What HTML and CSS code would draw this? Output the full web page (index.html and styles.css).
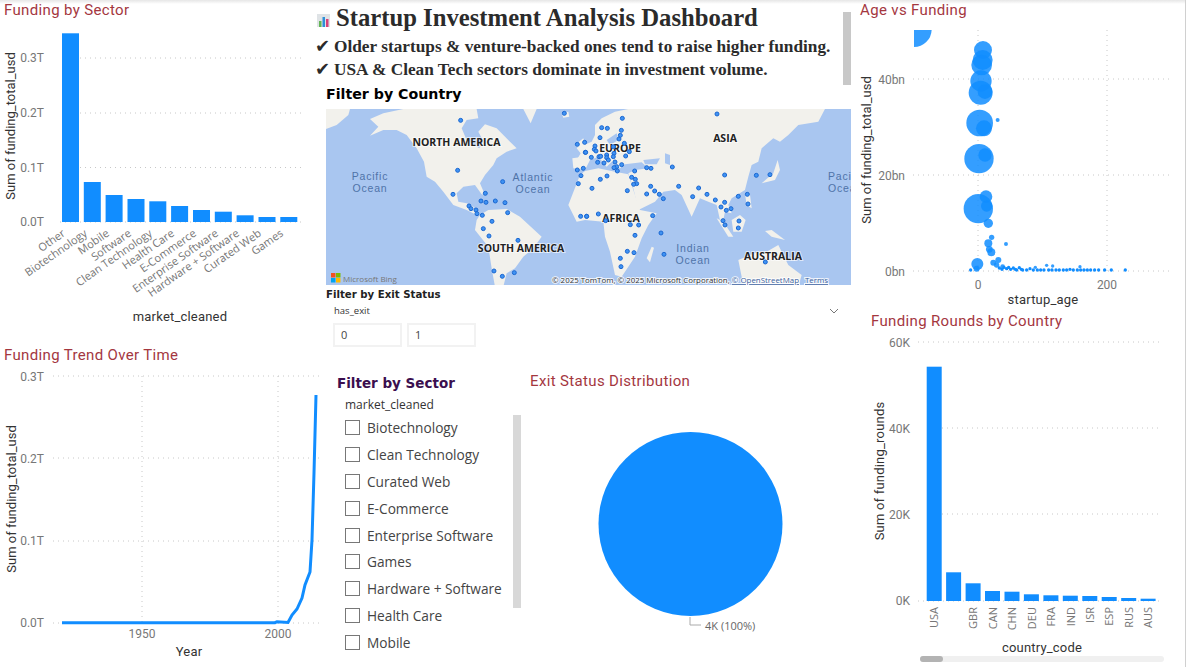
FILE: index.html
```html
<!DOCTYPE html>
<html lang="en">
<head>
    <meta charset="UTF-8">
    <title>Startup Investment Analysis Dashboard</title>
    <link rel="stylesheet" href="styles.css">
</head>
<body>
<div class="report">
    <!-- left column -->
    <div class="column">
        <section class="visual sector-chart">
            <h2 class="visual-title">Funding by Sector</h2>
            <svg width="320" height="320" viewBox="0 20 320 320">
                <g class="grid">
                    <path d="M80 58H304M80 113H304M80 167.5H304M60 222H304"/>
                </g>
                <g class="tick" text-anchor="end">
                    <text x="44" y="62">0.3T</text>
                    <text x="44" y="117">0.2T</text>
                    <text x="44" y="172">0.1T</text>
                    <text x="44" y="226">0.0T</text>
                </g>
                <g class="bar">
                    <rect x="62" y="33.3" width="17" height="188.7"/>
                    <rect x="83.8" y="182" width="17" height="40"/>
                    <rect x="105.6" y="195" width="17" height="27"/>
                    <rect x="127.5" y="199" width="17" height="23"/>
                    <rect x="149.3" y="201.3" width="17" height="20.7"/>
                    <rect x="171.1" y="206" width="17" height="16"/>
                    <rect x="193" y="210" width="17" height="12"/>
                    <rect x="214.8" y="211.7" width="17" height="10.3"/>
                    <rect x="236.6" y="215.3" width="17" height="6.7"/>
                    <rect x="258.5" y="217" width="17" height="5"/>
                    <rect x="280.3" y="217" width="17" height="5"/>
                </g>
                <g class="category" text-anchor="end">
                    <text transform="translate(66 235) rotate(-35)">Other</text>
                    <text transform="translate(88 235) rotate(-35)">Biotechnology</text>
                    <text transform="translate(110 235) rotate(-35)">Mobile</text>
                    <text transform="translate(132 235) rotate(-35)">Software</text>
                    <text transform="translate(153 235) rotate(-35)">Clean Technology</text>
                    <text transform="translate(175 235) rotate(-35)">Health Care</text>
                    <text transform="translate(197 235) rotate(-35)">E-Commerce</text>
                    <text transform="translate(219 235) rotate(-35)">Enterprise Software</text>
                    <text transform="translate(240 235) rotate(-35)">Hardware + Software</text>
                    <text transform="translate(262 235) rotate(-35)">Curated Web</text>
                    <text transform="translate(284 235) rotate(-35)">Games</text>
                </g>
                <text class="axis-title y-title" text-anchor="middle" transform="translate(15 126) rotate(-90)">Sum of funding_total_usd</text>
                <text class="axis-title" text-anchor="middle" x="180" y="321">market_cleaned</text>
            </svg>
        </section>
        <section class="visual trend-chart">
            <h2 class="visual-title">Funding Trend Over Time</h2>
            <svg width="320" height="302" viewBox="0 365 320 302">
                <g class="grid">
                    <path d="M53 376H323M53 458H323M53 541H323M53 623H323M142 376V623M278 376V623"/>
                </g>
                <g class="tick" text-anchor="end">
                    <text x="44" y="381">0.3T</text>
                    <text x="44" y="463">0.2T</text>
                    <text x="44" y="545">0.1T</text>
                    <text x="44" y="627">0.0T</text>
                </g>
                <g class="tick" text-anchor="middle">
                    <text x="142" y="638">1950</text>
                    <text x="278" y="638">2000</text>
                </g>
                <path class="trend-line" d="M62 622.7H275L277 621.7 288 622.4 292 615 297 609 302 598 305 585 310 572 312 540 314 473 316 395"/>
                <text class="axis-title y-title" text-anchor="middle" transform="translate(16 499) rotate(-90)">Sum of funding_total_usd</text>
                <text class="axis-title" text-anchor="middle" x="189" y="656">Year</text>
            </svg>
        </section>
    </div>

    <!-- middle column -->
    <div class="column">
        <header class="summary">
            <div class="summary-text">
                <h1 class="summary-title">
                    <svg class="summary-icon" width="13" height="13" viewBox="0 0 13 13">
                        <rect width="13" height="13" fill="#dfe3e6"/>
                        <rect x="2" y="7" width="2.5" height="6" fill="#63b556"/>
                        <rect x="5.5" y="3" width="2.5" height="10" fill="#2f8fd8"/>
                        <rect x="9" y="5" width="2.5" height="8" fill="#d9407a"/>
                    </svg>
                    Startup Investment Analysis Dashboard
                </h1>
                <p class="summary-line"><span class="check">✔</span>Older startups &amp; venture-backed ones tend to raise higher funding.</p>
                <p class="summary-line"><span class="check">✔</span>USA &amp; Clean Tech sectors dominate in investment volume.</p>
            </div>
            <div class="summary-scroll"></div>
        </header>

        <h3 class="filter-title country-title">Filter by Country</h3>
        <svg class="map" width="525" height="176" viewBox="326 109 525 176">
            <rect class="ocean" x="326" y="109" width="525" height="176"/>
            <!-- west half, traced in 3x crop coordinates -->
            <g class="land" transform="translate(320 105) scale(.3333)">
                <path d="M18 12H90L85 30 50 60 18 72Z"/>
                <path d="M150 42 190 25 250 12H470L475 40 440 45 425 70 440 105 478 130 490 108 475 80 495 58 530 70 570 110 590 130 560 140 530 160 520 180 495 210 480 235 495 270 485 268 465 240 430 245 410 265 415 290 440 295 460 305 480 325 470 330 440 315 400 300 370 260 345 230 320 215 312 170 290 130 260 90 230 75 190 75 150 92 175 65Z"/>
                <path d="M610 12H650L632 55Z"/>
                <path d="M480 330 505 315 560 312 600 335 665 395 640 430 610 455 585 490 560 505 550 545H525L515 490 505 425 465 375 470 345Z"/>
                <path d="M725 25 745 20 748 35 730 38Z"/>
                <path d="M765 120 790 100 800 140 805 165 770 165 785 140Z"/>
            </g>
            <!-- east half -->
            <g class="land" transform="translate(585 105) scale(.3333)">
                <path d="M-35 190-38 160-5 155-25 130 20 110 30 90 30 60 50 40 90 20 130 12H720L700 50 640 60 610 90 585 110 565 100 530 130 520 170 500 180 490 215 480 255 440 280 430 300 440 325 420 320 415 345 425 365 405 345 395 300 370 290 345 280 320 335 290 270 270 255 235 260 210 290 160 315 145 250 130 205 150 195 190 190 170 172 120 178 105 190 80 170 65 185 40 155 15 165 0 195Z"/>
                <path d="M-15 210 0 198 40 190 90 200 130 208 145 255 165 315 215 325 190 360 170 400 150 455 110 515 90 510 75 440 60 395 55 350 0 345-25 350-50 300Z"/>
                <path d="M185 460 200 425 207 428 195 472Z"/>
                <path d="M530 235 565 205 578 165 585 195 570 225Z"/>
                <path d="M395 340 415 350 445 395 430 395Z"/>
                <path d="M440 345 465 330 482 345 470 380 445 380Z"/>
                <path d="M480 265 495 270 500 310 485 300Z"/>
                <path d="M540 378 560 375 600 405 560 395Z"/>
                <path d="M460 465 520 440 545 440 580 420 610 480 650 510 640 545H480L470 515Z"/>
            </g>
            <g class="inland" transform="translate(585 105) scale(.3333)">
                <path d="M175 165 225 160 215 178 180 178Z"/>
                <path d="M240 145 255 150 255 180 240 175Z"/>
                <path d="M65 105 95 85 100 105 75 120Z"/>
            </g>
            <g class="continent" text-anchor="middle">
                <text x="456.5" y="146">NORTH AMERICA</text>
                <text x="521" y="252">SOUTH AMERICA</text>
                <text x="620" y="152">EUROPE</text>
                <text x="725" y="142">ASIA</text>
                <text x="621" y="222">AFRICA</text>
                <text x="773" y="260">AUSTRALIA</text>
            </g>
            <g class="sea" text-anchor="middle">
                <text x="370" y="180">Pacific</text>
                <text x="370" y="191.5">Ocean</text>
                <text x="533" y="181">Atlantic</text>
                <text x="533" y="192.5">Ocean</text>
                <text x="693" y="252">Indian</text>
                <text x="693" y="263.5">Ocean</text>
                <text x="828" y="180" text-anchor="start">Pacific</text>
                <text x="828" y="191.5" text-anchor="start">Ocean</text>
            </g>
            <g class="pins" transform="translate(320 105) scale(.3333)">
                <circle cx="422" cy="46" r="6"/><circle cx="733" cy="25" r="6"/><circle cx="772" cy="118" r="6"/>
                <circle cx="794" cy="112" r="6"/><circle cx="796" cy="142" r="6"/><circle cx="772" cy="195" r="6"/>
                <circle cx="790" cy="190" r="6"/><circle cx="783" cy="212" r="6"/><circle cx="775" cy="236" r="6"/>
                <circle cx="413" cy="196" r="6"/><circle cx="548" cy="230" r="6"/><circle cx="399" cy="268" r="6"/>
                <circle cx="496" cy="265" r="6"/><circle cx="483" cy="288" r="6"/><circle cx="498" cy="292" r="6"/>
                <circle cx="526" cy="288" r="6"/><circle cx="555" cy="293" r="6"/><circle cx="447" cy="303" r="6"/>
                <circle cx="453" cy="311" r="6"/><circle cx="468" cy="315" r="6"/><circle cx="471" cy="326" r="6"/>
                <circle cx="487" cy="331" r="6"/><circle cx="563" cy="323" r="6"/><circle cx="516" cy="349" r="6"/>
                <circle cx="490" cy="371" r="6"/><circle cx="507" cy="393" r="6"/><circle cx="594" cy="406" r="6"/>
                <circle cx="782" cy="334" r="6"/><circle cx="800" cy="334" r="6"/><circle cx="522" cy="498" r="6"/>
                <circle cx="547" cy="514" r="6"/><circle cx="583" cy="503" r="6"/>
            </g>
            <g class="pins" transform="translate(585 105) scale(.3333)">
                <circle cx="396" cy="27" r="6"/><circle cx="112" cy="40" r="6"/><circle cx="50" cy="68" r="6"/>
                <circle cx="67" cy="70" r="6"/><circle cx="109" cy="76" r="6"/><circle cx="106" cy="91" r="6"/>
                <circle cx="45" cy="98" r="6"/><circle cx="102" cy="102" r="6"/><circle cx="118" cy="115" r="6"/>
                <circle cx="30" cy="123" r="6"/><circle cx="85" cy="125" r="6"/><circle cx="28" cy="133" r="6"/>
                <circle cx="33" cy="138" r="6"/><circle cx="133" cy="140" r="6"/><circle cx="2" cy="142" r="6"/>
                <circle cx="87" cy="145" r="6"/><circle cx="65" cy="150" r="6"/><circle cx="122" cy="153" r="6"/>
                <circle cx="19" cy="157" r="6"/><circle cx="42" cy="155" r="6"/><circle cx="47" cy="154" r="6"/>
                <circle cx="65" cy="158" r="6"/><circle cx="85" cy="155" r="6"/><circle cx="70" cy="165" r="6"/>
                <circle cx="38" cy="172" r="6"/><circle cx="57" cy="174" r="6"/><circle cx="90" cy="171" r="6"/>
                <circle cx="110" cy="179" r="6"/><circle cx="95" cy="185" r="6"/><circle cx="87" cy="188" r="6"/>
                <circle cx="97" cy="198" r="6"/><circle cx="185" cy="188" r="6"/><circle cx="198" cy="190" r="6"/>
                <circle cx="262" cy="186" r="6"/><circle cx="149" cy="198" r="6"/><circle cx="66" cy="213" r="6"/>
                <circle cx="46" cy="223" r="6"/><circle cx="140" cy="217" r="6"/><circle cx="151" cy="223" r="6"/>
                <circle cx="155" cy="236" r="6"/><circle cx="146" cy="238" r="6"/><circle cx="21" cy="250" r="6"/>
                <circle cx="127" cy="257" r="6"/><circle cx="197" cy="244" r="6"/><circle cx="281" cy="244" r="6"/>
                <circle cx="341" cy="249" r="6"/><circle cx="209" cy="258" r="6"/><circle cx="223" cy="268" r="6"/>
                <circle cx="185" cy="267" r="6"/><circle cx="235" cy="281" r="6"/><circle cx="323" cy="275" r="6"/>
                <circle cx="366" cy="268" r="6"/><circle cx="391" cy="285" r="6"/><circle cx="419" cy="292" r="6"/>
                <circle cx="408" cy="306" r="6"/><circle cx="424" cy="316" r="6"/><circle cx="438" cy="311" r="6"/>
                <circle cx="460" cy="274" r="6"/><circle cx="487" cy="268" r="6"/><circle cx="489" cy="297" r="6"/>
                <circle cx="419" cy="210" r="6"/><circle cx="514" cy="211" r="6"/><circle cx="555" cy="209" r="6"/>
                <circle cx="5" cy="334" r="6"/><circle cx="40" cy="327" r="6"/><circle cx="203" cy="332" r="6"/>
                <circle cx="62" cy="347" r="6"/><circle cx="136" cy="359" r="6"/><circle cx="161" cy="360" r="6"/>
                <circle cx="414" cy="347" r="6"/><circle cx="420" cy="360" r="6"/><circle cx="462" cy="348" r="6"/>
                <circle cx="460" cy="369" r="6"/><circle cx="150" cy="391" r="6"/><circle cx="228" cy="384" r="6"/>
                <circle cx="127" cy="439" r="6"/><circle cx="147" cy="443" r="6"/><circle cx="237" cy="448" r="6"/>
                <circle cx="106" cy="460" r="6"/><circle cx="108" cy="485" r="6"/><circle cx="541" cy="471" r="6"/>
            </g>
            <rect x="331" y="273" width="4.5" height="4.5" fill="#f25022"/>
            <rect x="336" y="273" width="4.5" height="4.5" fill="#7fba00"/>
            <rect x="331" y="278" width="4.5" height="4.5" fill="#00a4ef"/>
            <rect x="336" y="278" width="4.5" height="4.5" fill="#ffb900"/>
            <text class="bing" x="343" y="281.5">Microsoft Bing</text>
            <text class="credit" x="552" y="283">© 2025 TomTom, © 2025 Microsoft Corporation, <tspan class="credit-link">© OpenStreetMap</tspan></text>
            <text class="credit credit-link" x="805" y="283">Terms</text>
        </svg>

        <div class="exit-filter">
            <h3 class="filter-title exit-title">Filter by Exit Status</h3>
            <div class="slicer-head">
                <span>has_exit</span>
                <svg width="10" height="6" viewBox="0 0 10 6"><path d="M1 1 5 5 9 1" fill="none" stroke="#777"/></svg>
            </div>
            <div class="tiles">
                <span class="tile">0</span>
                <span class="tile">1</span>
            </div>
        </div>

        <div class="lower">
            <div class="sector-filter">
                <h3 class="filter-title sector-title">Filter by Sector</h3>
                <div class="slicer-name">market_cleaned</div>
                <div class="slicer-body">
                    <ul class="slicer-list">
                        <li><span class="box"></span>Biotechnology</li>
                        <li><span class="box"></span>Clean Technology</li>
                        <li><span class="box"></span>Curated Web</li>
                        <li><span class="box"></span>E-Commerce</li>
                        <li><span class="box"></span>Enterprise Software</li>
                        <li><span class="box"></span>Games</li>
                        <li><span class="box"></span>Hardware + Software</li>
                        <li><span class="box"></span>Health Care</li>
                        <li><span class="box"></span>Mobile</li>
                    </ul>
                    <div class="slicer-scroll"></div>
                </div>
            </div>
            <section class="visual pie-chart">
                <h2 class="visual-title">Exit Status Distribution</h2>
                <svg width="328" height="277" viewBox="525 390 328 277">
                    <circle class="pie" cx="690.5" cy="524" r="92"/>
                    <path class="leader" d="M690 617V625H701"/>
                    <text class="pie-label" x="705" y="630">4K (100%)</text>
                </svg>
            </section>
        </div>
    </div>

    <!-- right column -->
    <div class="column right">
        <section class="visual age-chart">
            <h2 class="visual-title">Age vs Funding</h2>
            <svg width="333" height="290" viewBox="853 20 333 290">
                <g class="grid">
                    <path d="M913 79H1170M913 175H1170M913 271H1170M978 30V271M1107 30V271"/>
                </g>
                <g class="tick" text-anchor="end">
                    <text x="905" y="84">40bn</text>
                    <text x="905" y="180">20bn</text>
                    <text x="905" y="276">0bn</text>
                </g>
                <g class="tick" text-anchor="middle">
                    <text x="978" y="289">0</text>
                    <text x="1107" y="289">200</text>
                </g>
                <g class="bubbles" transform="translate(850 0) scale(.3333)">
                    <path d="M192 90H245A53 53 0 0 1 192 141Z"/>
                    <circle cx="399" cy="150" r="27"/><circle cx="398" cy="180" r="30"/><circle cx="395" cy="195" r="31"/>
                    <circle cx="393" cy="243" r="32"/><circle cx="392" cy="278" r="36"/><circle cx="405" cy="275" r="22"/>
                    <circle cx="389" cy="369" r="40"/><circle cx="402" cy="385" r="24"/><circle cx="443" cy="360" r="6"/>
                    <circle cx="387" cy="476" r="44"/><circle cx="405" cy="465" r="20"/><circle cx="385" cy="626" r="44"/>
                    <circle cx="408" cy="590" r="19"/><circle cx="410" cy="618" r="17"/><circle cx="415" cy="670" r="14"/>
                    <circle cx="425" cy="712" r="8"/><circle cx="415" cy="730" r="12"/><circle cx="418" cy="748" r="10"/>
                    <circle cx="424" cy="757" r="12"/><circle cx="468" cy="732" r="6"/><circle cx="382" cy="792" r="18"/>
                    <circle cx="380" cy="806" r="9"/><circle cx="430" cy="788" r="9"/><circle cx="445" cy="780" r="9"/>
                    <circle cx="440" cy="795" r="8"/><circle cx="458" cy="800" r="7"/><circle cx="590" cy="796" r="5"/>
                    <circle cx="608" cy="798" r="5"/><circle cx="690" cy="800" r="5"/><circle cx="556" cy="802" r="5"/>
                    <path class="small-dots" d="M362 810h0M448 804h0M456 808h0M462 802h0M470 806h0M476 802h0M482 808h0M490 804h0M496 808h0M500 810h0M508 803h0M514 808h0M518 810h0M530 810h0M540 806h0M550 810h0M562 810h0M572 810h0M582 810h0M596 810h0M606 810h0M618 810h0M628 810h0M640 810h0M650 810h0M660 808h0M670 810h0M682 810h0M692 810h0M702 810h0M712 810h0M722 810h0M734 810h0M746 810h0M764 810h0M784 810h0M826 810h0"/>
                </g>
                <text class="axis-title y-title" text-anchor="middle" transform="translate(871 150) rotate(-90)">Sum of funding_total_usd</text>
                <text class="axis-title" text-anchor="middle" x="1043" y="304">startup_age</text>
            </svg>
        </section>
        <section class="visual rounds-chart">
            <h2 class="visual-title">Funding Rounds by Country</h2>
            <svg width="333" height="336" viewBox="853 331 333 336">
                <g class="grid">
                    <path d="M918 342H1162M942 428H1162M942 514H1162M918 601H1162"/>
                </g>
                <g class="tick" text-anchor="end">
                    <text x="910" y="347">60K</text>
                    <text x="910" y="433">40K</text>
                    <text x="910" y="519">20K</text>
                    <text x="910" y="605">0K</text>
                </g>
                <g class="bar">
                    <rect x="926.7" y="366.7" width="15" height="234.3"/>
                    <rect x="946.1" y="572.3" width="15" height="28.7"/>
                    <rect x="965.6" y="583.3" width="15" height="17.7"/>
                    <rect x="985" y="591" width="15" height="10"/>
                    <rect x="1004.5" y="591.7" width="15" height="9.3"/>
                    <rect x="1023.9" y="594.3" width="15" height="6.7"/>
                    <rect x="1043.4" y="595.3" width="15" height="5.7"/>
                    <rect x="1062.8" y="595.7" width="15" height="5.3"/>
                    <rect x="1082.3" y="596" width="15" height="5"/>
                    <rect x="1101.7" y="597" width="15" height="4"/>
                    <rect x="1121.2" y="598" width="15" height="3"/>
                    <rect x="1140.6" y="598.7" width="15" height="2.3"/>
                </g>
                <g class="category" text-anchor="end">
                    <text transform="translate(938 607) rotate(-90)">USA</text>
                    <text transform="translate(977 607) rotate(-90)">GBR</text>
                    <text transform="translate(997 607) rotate(-90)">CAN</text>
                    <text transform="translate(1016 607) rotate(-90)">CHN</text>
                    <text transform="translate(1036 607) rotate(-90)">DEU</text>
                    <text transform="translate(1055 607) rotate(-90)">FRA</text>
                    <text transform="translate(1075 607) rotate(-90)">IND</text>
                    <text transform="translate(1094 607) rotate(-90)">ISR</text>
                    <text transform="translate(1113 607) rotate(-90)">ESP</text>
                    <text transform="translate(1133 607) rotate(-90)">RUS</text>
                    <text transform="translate(1152 607) rotate(-90)">AUS</text>
                </g>
                <text class="axis-title" text-anchor="middle" transform="translate(884 471) rotate(-90)">Sum of funding_rounds</text>
                <text class="axis-title" text-anchor="middle" x="1042" y="652">country_code</text>
                <rect class="scroll-track" x="920" y="656" width="244" height="6" rx="3"/>
                <rect class="scroll-thumb" x="920" y="656" width="23" height="6" rx="3"/>
            </svg>
        </section>
    </div>
</div>
</body>
</html>
```

FILE: styles.css
```css
body {
    margin: 0;
    background-color: white;
    font-family: "Open Sans", sans-serif;
    overflow: hidden;
}
.report {
    display: grid;
    grid-template-columns: 320px 533px 333px;
    width: 1186px;
    height: 667px;
    overflow: hidden;
    background: linear-gradient(#e6e6e6, white 4px);
}
.column {
    height: 667px;
    min-width: 0;
}
.right {
    border-right: 1px solid #d0d0d0;
    box-sizing: border-box;
}
svg {
    display: block;
    overflow: hidden;
}

/* chart titles */
.visual-title {
    margin: 0;
    font-family: Roboto, sans-serif;
    font-size: 15px;
    font-weight: 400;
    line-height: 20px;
    letter-spacing: .35px;
    color: #a4373f;
}
.sector-chart .visual-title {
    padding-left: 4px;
}
.trend-chart {
    padding-top: 5px;
}
.trend-chart .visual-title {
    padding-left: 4px;
}
.age-chart .visual-title {
    padding-left: 7px;
}
.rounds-chart .visual-title {
    height: 20px;
    padding: 1px 0 0 18px;
}
.pie-chart {
    flex: 1;
}
.pie-chart .visual-title {
    height: 19px;
    padding: 1px 0 0 5px;
}

/* chart parts */
.grid path {
    fill: none;
    stroke: #c8c8c8;
    stroke-width: 1;
    stroke-dasharray: 1 4;
}
.tick text {
    font-family: Roboto, sans-serif;
    font-size: 12px;
    fill: #777;
}
.category text {
    font-family: "Open Sans", sans-serif;
    font-size: 11px;
    fill: #777;
}
.axis-title {
    font-family: Roboto, sans-serif;
    font-size: 13px;
    letter-spacing: .2px;
    fill: #333;
}
.y-title {
    letter-spacing: 0;
}
.bar rect {
    fill: #118dff;
}
.trend-line {
    fill: none;
    stroke: #118dff;
    stroke-width: 3;
}
.bubbles {
    fill: #118dff;
    fill-opacity: .85;
}
.small-dots {
    fill: none;
    stroke: #118dff;
    stroke-width: 10;
    stroke-linecap: round;
}
.pie {
    fill: #118dff;
}
.leader {
    fill: none;
    stroke: #aaa;
}
.pie-label {
    font-size: 11px;
    fill: #666;
}
.scroll-track {
    fill: #f0f0f0;
}
.scroll-thumb {
    fill: #b3b3b3;
}

/* summary text box */
.summary {
    display: flex;
    justify-content: space-between;
    height: 85px;
}
.summary-text {
    padding-top: 4px;
    color: #2b2b2b;
    font-family: "Liberation Serif", serif;
}
.summary-title {
    display: flex;
    align-items: center;
    margin: 0;
    height: 28px;
    font-size: 24.7px;
    font-weight: 700;
    white-space: nowrap;
}
.summary-icon {
    margin: 5px 6px 0 -3px;
}
.summary-line {
    margin: 0;
    height: 23px;
    line-height: 23px;
    font-size: 17.3px;
    font-weight: 700;
    white-space: nowrap;
}
.summary-line:first-of-type {
    margin-top: 2px;
}
.check {
    display: inline-block;
    width: 19px;
    margin-left: -5px;
    font-family: "DejaVu Sans", sans-serif;
    font-size: 18px;
}
.summary-scroll {
    align-self: flex-end;
    width: 8px;
    height: 73px;
    margin-right: 2px;
    background-color: #c8c8c8;
}

/* slicers */
.filter-title {
    margin: 0;
    font-family: "DejaVu Sans", sans-serif;
    font-weight: 700;
}
.country-title {
    height: 24px;
    padding-left: 6px;
    font-size: 14.2px;
    line-height: 19px;
    color: black;
}
.map {
    margin-left: 6px;
}
.ocean {
    fill: #a9c6f0;
}
.land {
    filter: blur(.5px);
}
.land path {
    fill: #f2f1ec;
}
.inland path {
    fill: #a9c6f0;
}
.continent text {
    font-family: "Open Sans", sans-serif;
    font-size: 10.5px;
    font-weight: 700;
    fill: #222;
    stroke: rgba(255, 255, 255, .6);
    stroke-width: 2px;
    paint-order: stroke;
}
.sea text {
    font-family: "Liberation Sans", sans-serif;
    font-size: 10.5px;
    letter-spacing: .8px;
    fill: #4f73a8;
}
.pins circle {
    fill: #3f92f2;
    stroke: #1a66d0;
    stroke-width: 3;
}
.bing {
    font-size: 8px;
    fill: #777;
}
.credit {
    font-size: 7.9px;
    fill: #333;
    stroke: rgba(255, 255, 255, .8);
    stroke-width: 2px;
    paint-order: stroke;
}
.credit-link {
    fill: #3a5f9e;
    text-decoration: underline;
}
.exit-filter {
    height: 85px;
    padding: 3px 6px 0;
    box-sizing: border-box;
}
.exit-title {
    font-size: 10.2px;
    line-height: 14px;
    color: #222;
}
.slicer-head {
    display: flex;
    justify-content: space-between;
    align-items: center;
    margin-top: 2px;
    padding: 0 8px;
    font-size: 9.5px;
    color: #333;
}
.tiles {
    display: flex;
    gap: 5px;
    margin-top: 6px;
    padding-left: 7px;
}
.tile {
    width: 69px;
    height: 24px;
    padding-left: 6px;
    box-sizing: border-box;
    border: 2px solid #f2f2f2;
    font-size: 11px;
    line-height: 20px;
    color: #444;
}
.lower {
    display: flex;
    height: 297px;
}
.sector-filter {
    width: 205px;
    padding: 5px 0 0 17px;
    box-sizing: border-box;
}
.sector-title {
    height: 17px;
    font-size: 13.5px;
    line-height: 17px;
    color: #3b0f4f;
}
.slicer-name {
    height: 22.5px;
    padding: 4px 0 0 8px;
    box-sizing: border-box;
    font-size: 12px;
    color: #333;
}
.slicer-body {
    display: flex;
    justify-content: space-between;
}
.slicer-list {
    margin: 0;
    padding: 0 0 0 8px;
    list-style: none;
}
.slicer-list li {
    display: flex;
    align-items: center;
    gap: 7px;
    height: 26.8px;
    font-size: 13.7px;
    color: #444;
    white-space: nowrap;
}
.box {
    width: 13px;
    height: 13px;
    border: 1px solid #777;
}
.slicer-scroll {
    width: 8px;
    height: 193px;
    margin-right: 4px;
    background-color: #d8d8d8;
}
```
